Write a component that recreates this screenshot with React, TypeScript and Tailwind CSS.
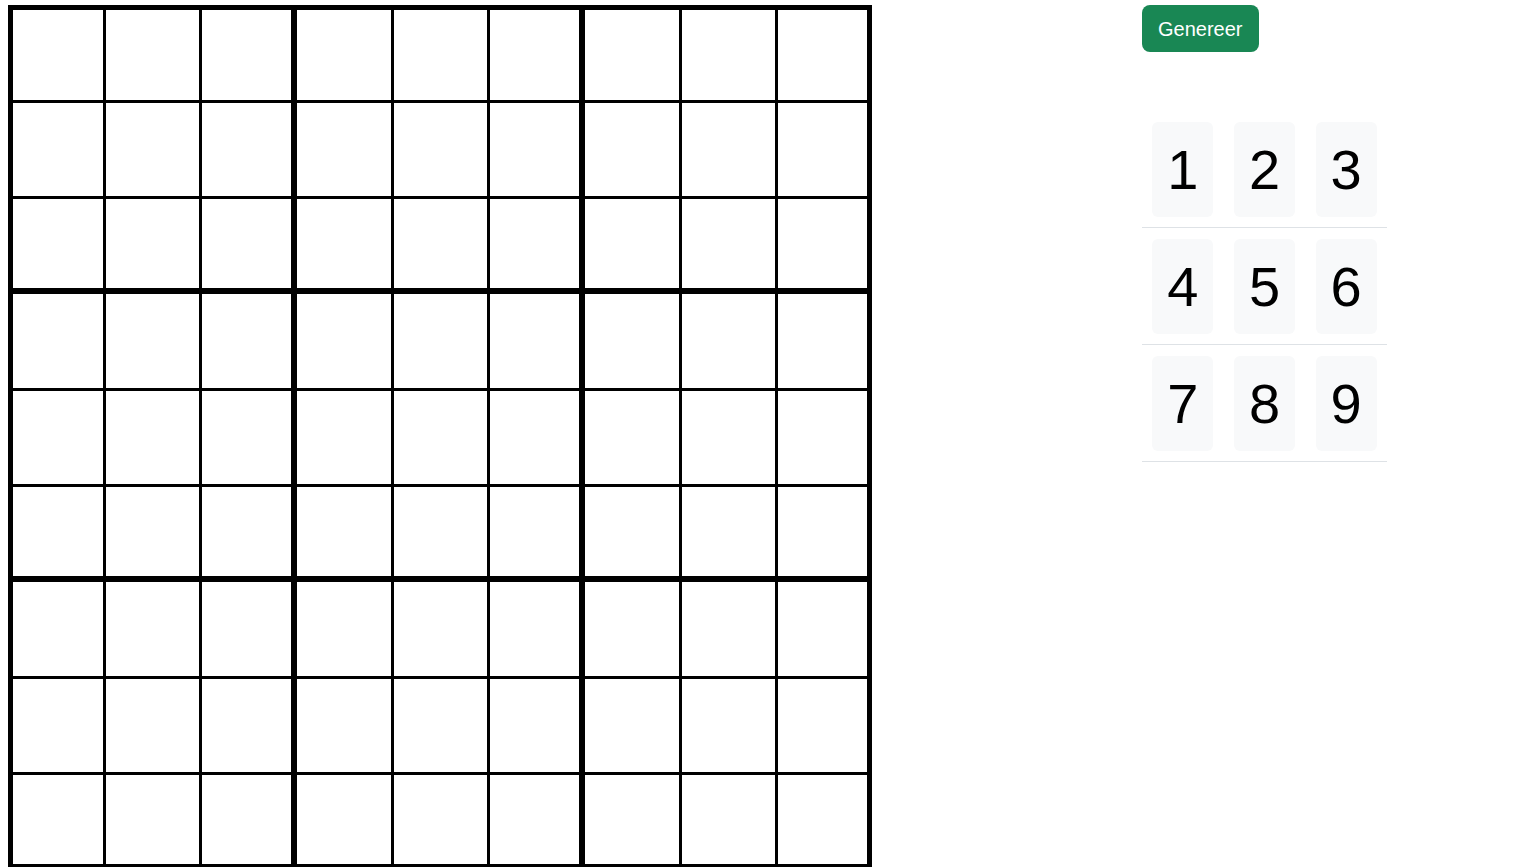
import React from 'react';

// content size of each cell (px), index 0..8
const SIZES = [90, 93, 89, 94, 93, 89, 94, 93, 89];

const colBorder = (c: number) =>
  c === 8 ? 'border-r-[5px]' : c === 2 || c === 5 ? 'border-r-[6px]' : 'border-r-[3px]';
const rowBorder = (r: number) =>
  r === 8 ? 'border-b-[5px]' : r === 2 || r === 5 ? 'border-b-[6px]' : 'border-b-[3px]';

const WIDTHS = ['w-[93px]', 'w-[96px]', 'w-[95px]', 'w-[97px]', 'w-[96px]', 'w-[95px]', 'w-[97px]', 'w-[96px]', 'w-[94px]'];
const HEIGHTS = ['h-[93px]', 'h-[96px]', 'h-[95px]', 'h-[97px]', 'h-[96px]', 'h-[95px]', 'h-[97px]', 'h-[96px]', 'h-[94px]'];

const Board: React.FC = () => (
  <div className="border-l-[5px] border-t-[5px] border-black w-[864px] shrink-0">
    {SIZES.map((_, r) => (
      <div key={r} className="flex">
        {SIZES.map((_, c) => (
          <div
            key={c}
            className={`${WIDTHS[c]} ${HEIGHTS[r]} ${colBorder(c)} ${rowBorder(r)} border-black bg-white`}
          />
        ))}
      </div>
    ))}
  </div>
);

const PAD = [
  [1, 2, 3],
  [4, 5, 6],
  [7, 8, 9],
];

const App: React.FC = () => {
  return (
    <div className="flex items-start pl-2 pt-[5px] bg-white min-h-screen overflow-hidden" style={{ fontFamily: '"Liberation Sans", Arial, sans-serif' }}>
      <Board />
      <div className="ml-[270px] flex flex-col">
        <button className="self-start h-[47px] px-4 bg-[#198754] text-white text-[20px] leading-[30px] rounded-lg">
          Genereer
        </button>
        <div className="mt-[59px] w-[245px]">
          {PAD.map((row, i) => (
            <div key={i} className="flex border-b border-[#dee2e6]">
              {row.map((n) => (
                <div key={n} className="flex-1 flex justify-center pt-[11px] pb-[10px]">
                  <div className="w-[61px] h-[95px] rounded-md bg-[#f8f9fa] flex items-center justify-center text-[56px] leading-none text-black">
                    {n}
                  </div>
                </div>
              ))}
            </div>
          ))}
        </div>
      </div>
    </div>
  );
};

export default App;
